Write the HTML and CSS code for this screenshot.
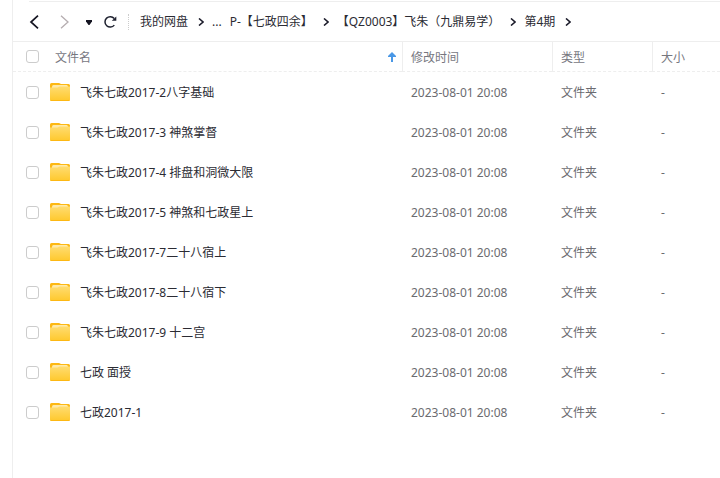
FILE: index.html
```html
<!DOCTYPE html>
<html lang="zh-CN">
<head>
<meta charset="utf-8">
<meta name="viewport" content="width=device-width, initial-scale=1">
<title>第4期</title>
<link rel="stylesheet" href="styles.css">
</head>
<body>
<svg class="sprite" aria-hidden="true">
  <defs>
    <linearGradient id="folder-front" x1="0" y1="0" x2="0" y2="1">
      <stop offset="0" stop-color="#ffdc70"/>
      <stop offset="1" stop-color="#ffc82c"/>
    </linearGradient>
  </defs>
  <symbol id="folder" viewBox="0 0 20 18">
    <path d="M0 16V1.500Q0 0 1.500 0H9L11 1H18.500Q20 1 20 2.500V16Z" fill="#fdb813"/>
    <path d="M2 4Q2 2 3.500 2H16.500Q18 2 18 4V6H2Z" fill="#ffe9a8"/>
    <path d="M0 4.500H7.500L9.500 3.500H20V16Q20 18 18.500 18H1.500Q0 18 0 16Z" fill="url(#folder-front)"/>
    <path d="M0 16V16.500Q0 18 1.500 18H18.500Q20 18 20 16.500V16Q20 17 18.500 17H1.500Q0 17 0 16Z" fill="#fdb813"/>
  </symbol>
  <symbol id="next" viewBox="0 0 6 8">
    <path d="M1 .5L5 4L1 7.500" fill="none" stroke="#1c1c2b" stroke-width="1.600"/>
  </symbol>
</svg>
<main class="browser">
  <header class="toolbar">
    <div class="history">
      <button type="button" aria-label="后退"><svg width="10" height="14" viewBox="0 0 10 14"><path d="M9 .7L2 7L9 13.300" fill="none" stroke="#151522" stroke-width="1.700"/></svg></button>
      <button type="button" aria-label="前进"><svg width="10" height="14" viewBox="0 0 10 14"><path d="M1 .7L8 7L1 13.300" fill="none" stroke="#b5adb0" stroke-width="1.300"/></svg></button>
      <button type="button" class="small" aria-label="历史记录"><svg width="6" height="5" viewBox="0 0 6 5"><path d="M0 0H6V1.500L3.500 5H2.500L0 1.500Z" fill="#151522"/></svg></button>
      <button type="button" aria-label="刷新"><svg width="14" height="14" viewBox="0 0 14 14"><path d="M11.200 3.600A5.200 5.200 0 1 0 11.300 10.100" fill="none" stroke="#1f2230" stroke-width="1.500"/><path d="M13.300 1.500V5.800H8.800Z" fill="#1f2230"/></svg></button>
    </div>
    <nav class="path" aria-label="路径">
      <a href="#">我的网盘</a>
      <svg class="next"><use href="#next"/></svg>
      <a href="#">...</a>
      <a href="#">P-【七政四余】</a>
      <svg class="next"><use href="#next"/></svg>
      <a href="#">【QZ0003】飞朱（九鼎易学）</a>
      <svg class="next"><use href="#next"/></svg>
      <a href="#">第4期</a>
      <svg class="next"><use href="#next"/></svg>
    </nav>
  </header>
  <table class="files">
    <colgroup><col><col class="time"><col class="type"><col class="size"></colgroup>
    <thead>
      <tr>
        <th scope="col"><div class="head"><input type="checkbox" aria-label="全选"><span>文件名</span><svg class="sort" width="8" height="10" viewBox="0 0 8 10"><path d="M4 0L8 4V5H5V10H3V5H0V4Z" fill="#4a98e6"/></svg></div></th>
        <th scope="col">修改时间</th><th scope="col">类型</th><th scope="col">大小</th>
      </tr>
    </thead>
    <tbody>
      <tr><td><label class="name"><input type="checkbox"><svg class="folder"><use href="#folder"/></svg><span>飞朱七政2017-2八字基础</span></label></td><td>2023-08-01 20:08</td><td>文件夹</td><td>-</td></tr>
      <tr><td><label class="name"><input type="checkbox"><svg class="folder"><use href="#folder"/></svg><span>飞朱七政2017-3 神煞掌督</span></label></td><td>2023-08-01 20:08</td><td>文件夹</td><td>-</td></tr>
      <tr><td><label class="name"><input type="checkbox"><svg class="folder"><use href="#folder"/></svg><span>飞朱七政2017-4 排盘和洞微大限</span></label></td><td>2023-08-01 20:08</td><td>文件夹</td><td>-</td></tr>
      <tr><td><label class="name"><input type="checkbox"><svg class="folder"><use href="#folder"/></svg><span>飞朱七政2017-5 神煞和七政星上</span></label></td><td>2023-08-01 20:08</td><td>文件夹</td><td>-</td></tr>
      <tr><td><label class="name"><input type="checkbox"><svg class="folder"><use href="#folder"/></svg><span>飞朱七政2017-7二十八宿上</span></label></td><td>2023-08-01 20:08</td><td>文件夹</td><td>-</td></tr>
      <tr><td><label class="name"><input type="checkbox"><svg class="folder"><use href="#folder"/></svg><span>飞朱七政2017-8二十八宿下</span></label></td><td>2023-08-01 20:08</td><td>文件夹</td><td>-</td></tr>
      <tr><td><label class="name"><input type="checkbox"><svg class="folder"><use href="#folder"/></svg><span>飞朱七政2017-9 十二宫</span></label></td><td>2023-08-01 20:08</td><td>文件夹</td><td>-</td></tr>
      <tr><td><label class="name"><input type="checkbox"><svg class="folder"><use href="#folder"/></svg><span>七政 面授</span></label></td><td>2023-08-01 20:08</td><td>文件夹</td><td>-</td></tr>
      <tr><td><label class="name"><input type="checkbox"><svg class="folder"><use href="#folder"/></svg><span>七政2017-1</span></label></td><td>2023-08-01 20:08</td><td>文件夹</td><td>-</td></tr>
    </tbody>
  </table>
</main>
</body>
</html>
```
FILE: styles.css
```css
* {
  box-sizing: border-box;
}

body {
  margin: 0;
  background: #fff;
  color: #2b2b33;
  font: 12px/20px "Noto Sans", "Noto Sans CJK SC", sans-serif;
}

svg {
  display: block;
  flex: none;
}

.sprite {
  position: absolute;
  width: 0;
  height: 0;
}

.browser {
  min-height: 100vh;
  margin-left: 12px;
  padding-top: 1px;
  border-left: 1px solid #eee;
}

.toolbar {
  display: flex;
  align-items: center;
  height: 41px;
  padding: 2px 0 0 16px;
  border-bottom: 1px solid #eee;
  background: linear-gradient(#eee, #eee) 16px 0 / 100% 1px no-repeat;
}

.history {
  display: flex;
  align-items: center;
  gap: 11px;
  height: 16px;
  margin-left: -5px;
  padding-right: 11px;
  border-right: 1px dotted #ccc;
}

button {
  display: flex;
  align-items: center;
  justify-content: center;
  width: 20px;
  height: 20px;
  margin: 0;
  padding: 0;
  border: 0;
  background: none;
}

.history .small {
  width: 6px;
}

.history button:last-child {
  width: 14px;
}

.path {
  display: flex;
  align-items: center;
  gap: 8px;
  margin-left: 11px;
  white-space: nowrap;
}

.path a {
  color: inherit;
  text-decoration: none;
}

.next {
  width: 6px;
  height: 8px;
  margin-left: 2px;
}

.files {
  width: 100%;
  table-layout: fixed;
  border-collapse: separate;
  border-spacing: 0;
}

.time {
  width: 150px;
}

.type {
  width: 100px;
}

.size {
  width: 68px;
}

th,
td {
  padding: 0 8px;
  color: #6b6b70;
  font-weight: 400;
  text-align: left;
  white-space: nowrap;
}

th {
  height: 30px;
  border-bottom: 1px dashed #eee;
  color: #77777f;
}

th + th {
  padding-top: 2px;
  border-left: 1px solid #eee;
}

td {
  height: 40px;
}

td + td {
  padding: 2px 0 0 9px;
}

th:first-child,
td:first-child {
  padding: 0 6px 0 13px;
}

.head {
  display: flex;
  align-items: center;
  gap: 16px;
}

.sort {
  margin-left: auto;
}

.name {
  display: flex;
  align-items: center;
  gap: 10px;
  color: #2b2b33;
}

.head span,
.name span {
  padding-top: 2px;
}

input {
  flex: none;
  width: 13px;
  height: 13px;
  margin: 0;
  appearance: none;
  border: 1px solid #ccc;
  border-radius: 3px;
  background: #fff;
}

.name input {
  margin-right: 1px;
}

input:checked {
  border-color: #4a98e6;
  background: #4a98e6;
}

.folder {
  width: 20px;
  height: 18px;
}
```
